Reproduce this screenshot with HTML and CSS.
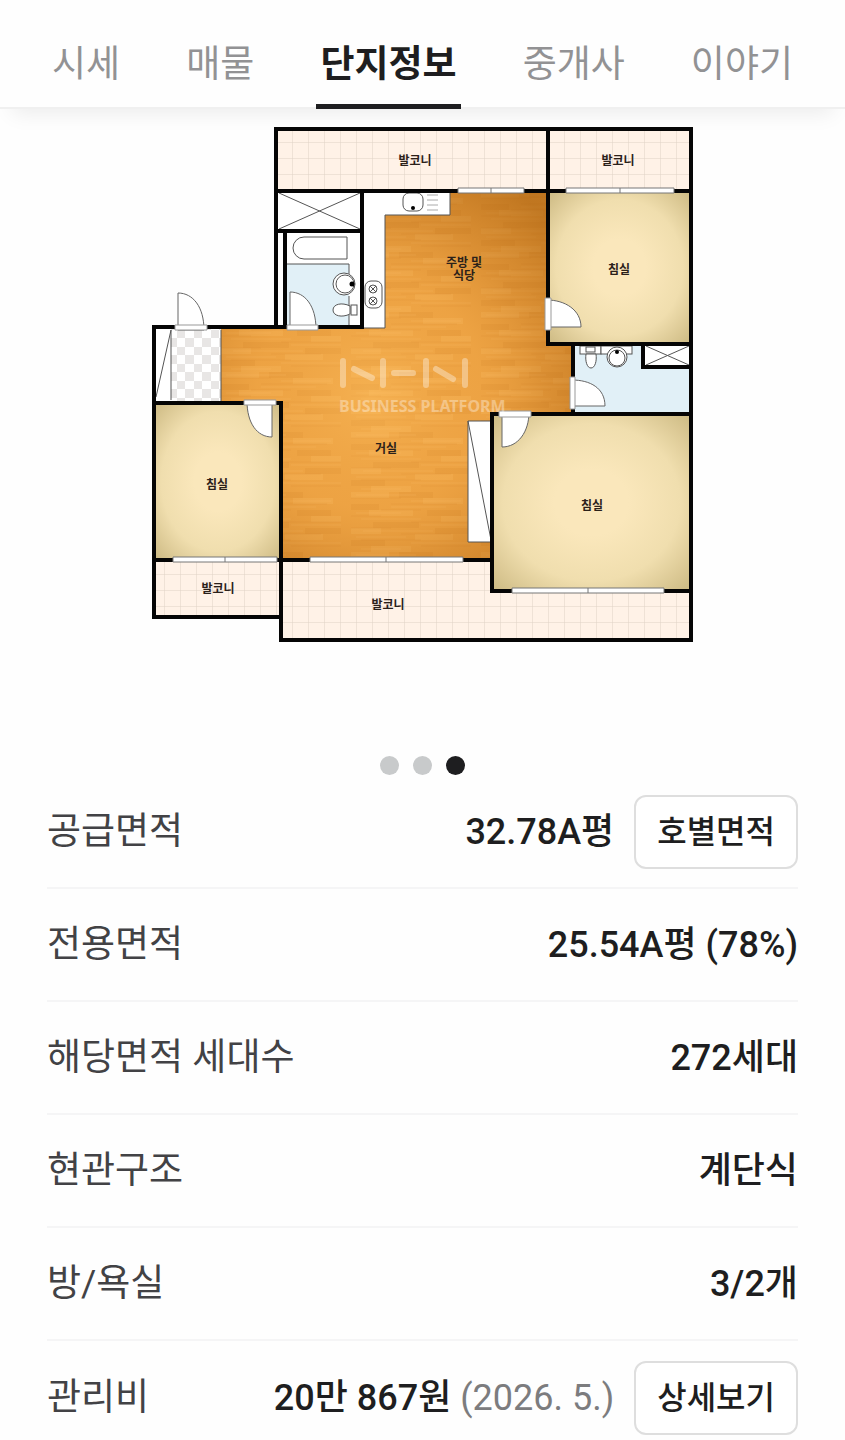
FILE: index.html
```html
<!DOCTYPE html>
<html lang="ko">
<head>
    <meta charset="UTF-8">
    <meta name="viewport" content="width=device-width, initial-scale=1.0">
    <title>단지정보</title>
    <link rel="stylesheet" href="styles.css">
</head>
<body>
    <nav class="tabs">
        <a href="#price">시세</a>
        <a href="#sale">매물</a>
        <a href="#info" class="active" aria-current="page">단지정보</a>
        <a href="#agent">중개사</a>
        <a href="#story">이야기</a>
    </nav>

    <main id="info">
        <div class="plan">
            <svg class="plan-image" viewBox="0 109 845 647" role="img" aria-label="32.78A평 평면도">
                <defs>
                    <pattern id="tile" x="277" y="127" width="16" height="16" patternUnits="userSpaceOnUse">
                        <rect width="16" height="16" fill="#fff2e7"/>
                        <path d="M16 0V16H0" fill="none" stroke="#e0d2c6"/>
                    </pattern>
                    <pattern id="checker" x="171" y="330" width="17" height="17" patternUnits="userSpaceOnUse">
                        <rect width="17" height="17" fill="#fff"/>
                        <path d="M6 0h8v8h-8zM0 8h6v9h-6zM14 8h3v9h-3z" fill="#e8e6e5"/>
                    </pattern>
                    <pattern id="wood" x="221" y="192" width="130" height="60" patternUnits="userSpaceOnUse">
                        <rect width="130" height="60" fill="#eda446"/>
                        <path d="M0 0h38v6H0zM72 6h40v6H72zM18 18h44v6H18zM90 24h30v6H90zM0 36h30v6H0zM64 42h38v6H64zM20 54h40v6H20z" fill="#f1ac50"/>
                        <path d="M48 0h34v6H48zM0 12h28v6H0zM76 18h34v6H76zM22 30h46v6H22zM84 36h36v6H84zM0 48h34v6H0z" fill="#e79d40"/>
                        <path d="M0 6h50M40 12h66M30 18h40M0 24h30M60 30h60M0 36h40M50 42h50M10 48h60M70 54h50" stroke="#d98d36" stroke-opacity=".3" fill="none"/>
                        <path d="M5 3h60M60 9h50M40 15h55M5 21h45M10 27h60M70 33h50M12 39h70M5 45h50M60 51h60M10 57h40" stroke="#ffc673" stroke-opacity=".25" fill="none"/>
                    </pattern>
                    <radialGradient id="shade" gradientUnits="userSpaceOnUse" cx="370" cy="395" r="250">
                        <stop offset="0" stop-color="#ffc160" stop-opacity=".45"/>
                        <stop offset="0.45" stop-color="#ee9e38" stop-opacity=".2"/>
                        <stop offset="0.7" stop-color="#bb6c14" stop-opacity=".35"/>
                        <stop offset="1" stop-color="#a85e0c" stop-opacity=".65"/>
                    </radialGradient>
                    <radialGradient id="room" r="0.75">
                        <stop offset="0.25" stop-color="#fae7bb"/>
                        <stop offset="0.6" stop-color="#f0deae"/>
                        <stop offset="1" stop-color="#c7b47c"/>
                    </radialGradient>
                </defs>

                <!-- floors -->
                <path d="M276 129H691V640H281V617H154V327H276z" fill="#fff"/>
                <g fill="url(#tile)">
                    <path d="M277 130H690V191H277zM155 560H280V616H155zM282 560H492V590H690V639H282z"/>
                </g>
                <path d="M385 215H450V192H547V344H572V414H491V558H283V402H221V328H385z" fill="url(#wood)"/>
                <path d="M385 215H450V192H547V344H572V414H491V558H283V402H221V328H385z" fill="url(#shade)"/>
                <rect x="549" y="192" width="141" height="151" fill="url(#room)"/>
                <rect x="493" y="415" width="197" height="175" fill="url(#room)"/>
                <rect x="155" y="404" width="126" height="155" fill="url(#room)"/>
                <rect x="171" y="329" width="50" height="72" fill="url(#checker)"/>
                <path d="M286 264H349V327H286zM573 345H643V367H690V413H573z" fill="#e1f0f7"/>

                <!-- cupboards and shafts -->
                <g fill="#fff" stroke="#555" stroke-width="1">
                    <path d="M279 193L360 229M360 193L279 229M646 346L689 365M689 346L646 365"/>
                    <path d="M171 330L156 397M171 330V400M221 330V401" fill="none"/>
                    <path d="M491 421H468V542H491"/>
                    <path d="M468 421L491 540"/>
                    <path d="M385 328V215H450V193M364 328H385" fill="none"/>
                    <path d="M286 264H349V274M349 296V306M349 315V326" fill="none"/>
                </g>

                <!-- bathroom and kitchen fittings -->
                <g fill="#fff" stroke="#555" stroke-width="1">
                    <path d="M347 237H304A11 11 0 0 0 304 259H347z"/>
                    <circle cx="344" cy="284" r="11"/>
                    <circle cx="345" cy="284" r="9"/>
                    <path d="M350 306C342 302 333 304 333 310S342 318 350 314z"/>
                    <rect x="351" y="305" width="6" height="10"/>
                    <rect x="403" y="193" width="20" height="18" rx="6"/>
                    <path d="M427 195H438M427 200H438M427 205H438M427 210H438" stroke="#aaa"/>
                    <rect x="365" y="281" width="17" height="27" rx="6"/>
                    <circle cx="373" cy="289" r="4"/>
                    <circle cx="373" cy="301" r="4"/>
                    <path d="M370 286L376 292M376 286L370 292M370 298L376 304M376 298L370 304"/>
                    <rect x="580" y="346" width="21" height="8"/>
                    <rect x="601" y="346" width="31" height="8"/>
                    <rect x="586" y="347" width="9" height="5"/>
                    <path d="M586 354H596C597 361 595 368 591 368S585 361 586 354z"/>
                    <circle cx="617" cy="357" r="10"/>
                    <circle cx="617" cy="358" r="8"/>
                </g>
                <circle cx="352" cy="284" r="2.5"/>
                <circle cx="413" cy="208" r="2"/>
                <circle cx="617" cy="352" r="2"/>

                <!-- walls -->
                <g fill="none" stroke="#050505" stroke-width="4">
                    <path d="M276 327V129H691V640H281V403H154V617H281"/>
                    <path d="M154 403V327H362V191M276 191H691M548 129V344H691"/>
                    <path d="M276 231H362M285 231V327"/>
                    <path d="M573 344V414M643 344V367H691M691 414H492V591H691"/>
                    <path d="M154 560H492"/>
                </g>

                <!-- windows -->
                <g fill="#fff" stroke="#777" stroke-width="1">
                    <path d="M458 188H524V193H458zM491 188V193"/>
                    <path d="M566 188H674V193H566zM620 188V193"/>
                    <path d="M173 557H277V562H173zM225 557V562"/>
                    <path d="M310 557H463V562H310zM386 557V562"/>
                    <path d="M512 588H664V593H512zM588 588V593"/>
                </g>

                <!-- doors -->
                <g fill="#fff" stroke="#666" stroke-width="1">
                    <path d="M178 330V293C193 293 204 307 204 330z"/>
                    <path d="M290 329V292C305 292 316 306 316 329z"/>
                    <path d="M547 300C565 300 581 310 581 327H547z"/>
                    <path d="M572 380C590 380 605 388 605 406H572z"/>
                    <path d="M502 412V447C518 447 529 432 529 412z"/>
                    <path d="M272 401V437C257 437 247 423 247 401z"/>
                </g>
                <g fill="#fff" stroke="#999" stroke-width="1">
                    <path d="M175 325H207V330H175zM287 325H318V330H287zM545 298H551V330H545zM570 377H575V409H570zM499 411H531V417H499zM244 400H276V405H244z"/>
                </g>

                <!-- watermark -->
                <g class="watermark">
                    <path d="M343 361V385M383 361V385M426 361V385M465 361V385M354 369L372 378M394 373H413M436 369L453 379"/>
                    <text x="339" y="412">BUSINESS PLATFORM</text>
                </g>

                <g class="room-name">
                    <text x="415" y="165">발코니</text>
                    <text x="618" y="165">발코니</text>
                    <text x="464" y="267">주방 및</text>
                    <text x="464" y="280">식당</text>
                    <text x="619" y="274">침실</text>
                    <text x="386" y="453">거실</text>
                    <text x="217" y="489">침실</text>
                    <text x="592" y="510">침실</text>
                    <text x="218" y="593">발코니</text>
                    <text x="388" y="609">발코니</text>
                </g>
            </svg>
            <div class="dots">
                <button type="button" aria-label="1번째 이미지"></button>
                <button type="button" aria-label="2번째 이미지"></button>
                <button type="button" class="on" aria-label="3번째 이미지"></button>
            </div>
        </div>

        <dl class="info-list">
            <div class="row">
                <dt>공급면적</dt>
                <dd>32.78A평 <button type="button" class="button">호별면적</button></dd>
            </div>
            <div class="row">
                <dt>전용면적</dt>
                <dd>25.54A평 (78%)</dd>
            </div>
            <div class="row">
                <dt>해당면적 세대수</dt>
                <dd>272세대</dd>
            </div>
            <div class="row">
                <dt>현관구조</dt>
                <dd>계단식</dd>
            </div>
            <div class="row">
                <dt>방/욕실</dt>
                <dd>3/2개</dd>
            </div>
            <div class="row">
                <dt>관리비</dt>
                <dd><span>20만 867원 <span class="date">(2026. 5.)</span></span> <button type="button" class="button">상세보기</button></dd>
            </div>
        </dl>
    </main>
</body>
</html>
```
FILE: styles.css
```css
* {
    box-sizing: border-box;
}
body {
    margin: 0;
    background-color: #fefefe;
    color: #1e1e20;
    font-family: Roboto, "Noto Sans CJK KR", sans-serif;
    font-size: 37px;
    line-height: 54px;
}
.tabs {
    display: flex;
    justify-content: space-between;
    height: 109px;
    padding: 38px 48px 0;
    border-bottom: 2px solid #f0f0f0;
    box-shadow: 0 16px 20px -12px rgba(0, 0, 0, 0.08);
}
.tabs a {
    height: 71px;
    padding: 0 4px;
    color: #929294;
    text-decoration: none;
}
.tabs .active {
    color: #1e1e20;
    font-weight: 700;
    border-bottom: 5px solid #1e1e20;
}
.plan-image {
    display: block;
    width: 100%;
}
.room-name {
    font-size: 12px;
    font-weight: 700;
    text-anchor: middle;
    fill: #2b211a;
}
.watermark {
    opacity: 0.35;
}
.watermark path {
    fill: none;
    stroke: #fff;
    stroke-width: 6px;
    stroke-linecap: round;
}
.watermark text {
    font-family: "Noto Sans", sans-serif;
    font-size: 16px;
    font-weight: 700;
    fill: #fff;
}
.dots {
    display: flex;
    justify-content: center;
    gap: 14px;
}
.dots button {
    width: 19px;
    height: 19px;
    padding: 0;
    border: none;
    border-radius: 50%;
    background-color: #c8cacb;
}
.dots .on {
    background-color: #1e1e20;
}
.info-list {
    margin: 1px 47px 0;
}
.row {
    display: flex;
    justify-content: space-between;
    align-items: center;
    height: 113px;
    border-bottom: 2px solid #f5f5f6;
}
.row:last-child {
    height: 99px;
    padding-top: 14px;
    border-bottom: none;
}
dt {
    color: #424245;
}
dd {
    display: flex;
    align-items: center;
    gap: 20px;
    margin: 0;
    font-size: 36px;
    font-weight: 500;
}
.date {
    color: #7c7c7e;
    font-weight: 400;
}
.button {
    height: 74px;
    padding: 0 21px 6px;
    border: 2px solid #dedede;
    border-radius: 12px;
    background-color: #fff;
    color: #1e1e20;
    font-family: inherit;
    font-size: 32px;
    font-weight: 500;
}
```
